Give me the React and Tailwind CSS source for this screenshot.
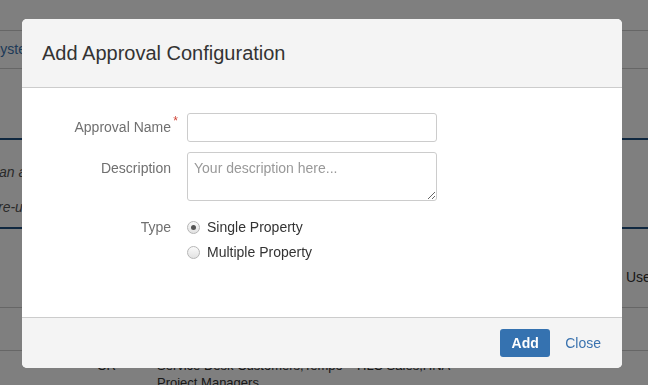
import React from 'react'

const font = { fontFamily: '"Liberation Sans", Arial, sans-serif' }

function Radio({ checked, label }) {
  return (
    <label className="flex items-center h-[25px] text-[14px] text-[#333]">
      <span className="w-[13px] h-[13px] rounded-full border border-[#b5b5b5] bg-gradient-to-b from-[#fafafa] to-[#e2e2e2] flex items-center justify-center">
        {checked && <span className="w-[5px] h-[5px] rounded-full bg-[#555]" />}
      </span>
      <span className="ml-[7px]">{label}</span>
    </label>
  )
}

export default function App() {
  return (
    <div className="relative w-[648px] h-[385px] overflow-hidden bg-white text-[14px] text-[#333]" style={font}>
      {/* Page behind the dialog */}
      <div className="h-[30px]" />
      <div className="h-[39px] border-t border-b border-[#ccc] flex items-center">
        <span className="ml-[-9px] text-[#3b73af]">System</span>
      </div>
      <div className="h-[71px] border-b-2 border-[#205081]" />
      <div className="h-[89px] border-b-2 border-[#205081] italic text-[#555] pt-[22px] space-y-[14px]">
        <div className="ml-[-1px]">an ap</div>
        <div className="ml-[-2px]">re-use</div>
      </div>
      <div className="h-[79px] border-b border-[#ccc] flex items-center pt-[18px]">
        <span className="ml-[626px] whitespace-nowrap">Users</span>
      </div>
      <div className="h-[43px] border-b border-[#ccc]" />
      <div className="flex pt-[6px] leading-[17px] text-[13px]">
        <div className="w-[97px]" />
        <div className="w-[60px]">CR</div>
        <div className="w-[200px]">Service Desk Customers,Tempo<br />Project Managers</div>
        <div>HLC Sales,HNA</div>
      </div>

      {/* Dialog */}
      <div className="fixed inset-0 bg-black/50">
        <div className="ml-[22px] mt-[19px] w-[600px] h-[349px] rounded-[5px] overflow-hidden bg-white flex flex-col">
          <div className="h-[69px] bg-[#f4f4f4] border-b border-[#ccc] flex items-center pl-[20px]">
            <h2 className="text-[20px] text-[#333]">Add Approval Configuration</h2>
          </div>
          <div className="flex-1 pt-[25px]">
            <div className="flex items-center">
              <div className="w-[149px] text-right text-[#707070] relative">
                Approval Name
                <span className="absolute right-[-7px] top-[-5px] text-[#d04437] text-[12px]">*</span>
              </div>
              <input className="ml-[16px] w-[250px] h-[29px] border border-[#ccc] rounded-[3px] px-[6px] outline-none" />
            </div>
            <div className="flex mt-[10px]">
              <div className="w-[149px] text-right text-[#707070] pt-[6px]">Description</div>
              <textarea
                className="ml-[16px] w-[250px] h-[49px] border border-[#ccc] rounded-[3px] px-[6px] py-[5px] outline-none placeholder:text-[#999]"
                placeholder="Your description here..."
              />
            </div>
            <div className="flex mt-[14px]">
              <div className="w-[149px] text-right text-[#707070] h-[25px] leading-[25px]">Type</div>
              <div className="ml-[16px]">
                <Radio checked label="Single Property" />
                <Radio label="Multiple Property" />
              </div>
            </div>
          </div>
          <div className="h-[51px] bg-[#f4f4f4] border-t border-[#ccc] flex items-center justify-end pr-[21px]">
            <button className="w-[50px] h-[28px] rounded-[3px] bg-[#3572b0] text-white font-bold text-[14px]">Add</button>
            <a className="ml-[15px] text-[#3b73af]">Close</a>
          </div>
        </div>
      </div>
    </div>
  )
}
